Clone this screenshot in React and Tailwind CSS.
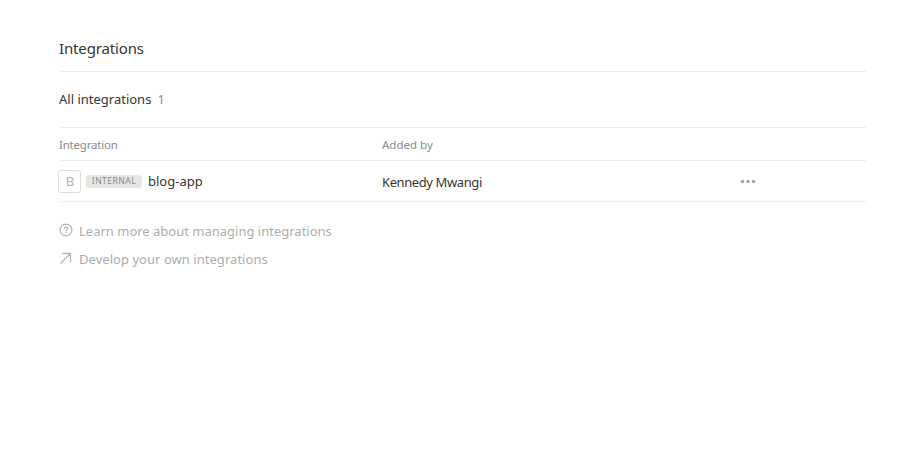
const segoe = "font-['Noto_Sans','Open_Sans',sans-serif]";

function QuestionIcon() {
  return (
    <svg width="14" height="14" viewBox="0 0 14 14" fill="none" stroke="#b3b3b1" className="relative -top-px shrink-0">
      <circle cx="7" cy="7" r="5.900" strokeWidth="1.200" />
      <path d="M5.500 5.600C5.500 4.700 6.100 4.200 7 4.200s1.600.5 1.600 1.300C8.600 6.500 7 6.700 7 7.900" strokeWidth="1.200" strokeLinecap="round" />
      <circle cx="7" cy="9.700" r=".7" fill="#b3b3b1" stroke="none" />
    </svg>
  );
}

function ArrowIcon() {
  return (
    <svg width="14" height="14" viewBox="0 0 14 14" fill="none" stroke="#b3b3b1" strokeWidth="1.300" className="relative -top-px shrink-0">
      <path d="M2 12 11.500 2.500M3.500 2.500h8v8" strokeLinecap="round" />
    </svg>
  );
}

export default function App() {
  return (
    <main className={`h-[462px] w-[913px] bg-white pl-[59px] pr-[47px] pt-[26px] text-[#37352f] ${segoe}`}>
      <h1 className="flex h-[46px] items-center border-b border-[#ededec] text-[15px] tracking-[-0.14px]">
        <span className="whitespace-nowrap">Integrations</span>
      </h1>
      <h2 className="flex h-[55px] items-center gap-1.5 text-[13px]">
        <span>All integrations</span>
        <span className="text-[#8c8b88]">1</span>
      </h2>
      <div className="grid h-[34px] grid-cols-[323px_1fr] items-center border-y border-[#ededec] pt-px text-[11.5px] text-[#8b8a87]">
        <span className="tracking-[-0.2px]">Integration</span>
        <span>Added by</span>
      </div>
      <div className="grid h-[41px] grid-cols-[323px_358px_1fr] items-center border-b border-[#ededec] text-[13px]">
        <div className="flex items-center">
          <span className="-ml-px flex size-[23px] items-center justify-center rounded-[3px] border border-[#dededc] pl-px pt-0.5 text-[#b3b3b1]">B</span>
          <span className="ml-[5px] flex h-[13px] w-[56px] items-center justify-center rounded-[3px] bg-[#e5e5e3] pt-px text-[8.5px] tracking-[0.5px] text-[#8b8a87]">INTERNAL</span>
          <span className="ml-[6px] pt-0.5">blog-app</span>
        </div>
        <span className="pt-[3px] tracking-[-0.4px]">Kennedy Mwangi</span>
        <svg width="16" height="5" viewBox="0 0 16 5" fill="#a8a8a6">
          <circle cx="2.500" cy="2.500" r="1.800" />
          <circle cx="8" cy="2.500" r="1.800" />
          <circle cx="13.500" cy="2.500" r="1.800" />
        </svg>
      </div>
      <nav className="mt-[15px] text-[13px] text-[#adadab]">
        <a className="flex h-7 items-center gap-1.5"><QuestionIcon /><span className="pt-0.5">Learn more about managing integrations</span></a>
        <a className="flex h-7 items-center gap-1.5"><ArrowIcon /><span className="pt-0.5 tracking-[0.04px]">Develop your own integrations</span></a>
      </nav>
    </main>
  );
}
